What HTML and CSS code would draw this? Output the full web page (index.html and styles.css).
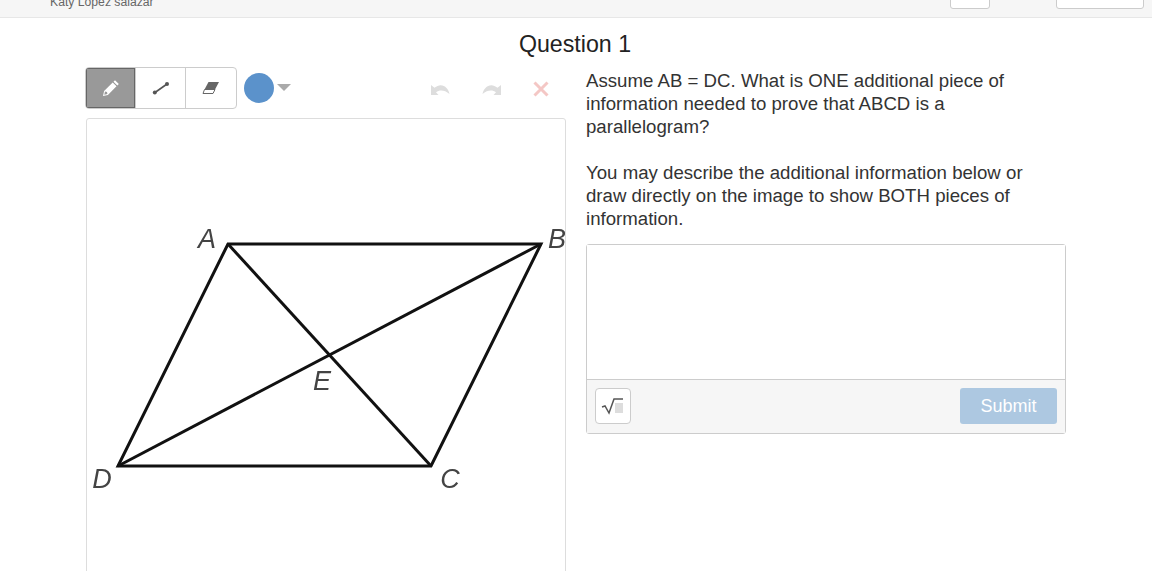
FILE: index.html
```html
<!DOCTYPE html>
<html lang="en">
<head>
    <meta charset="UTF-8">
    <meta name="viewport" content="width=device-width, initial-scale=1.0">
    <title>Question 1</title>
    <link rel="stylesheet" href="styles.css">
</head>
<body>
    <header class="top-bar">
        <span class="student-name">Katy Lopez salazar</span>
        <div class="top-actions">
            <div class="top-btn top-btn-small"></div>
            <div class="top-btn top-btn-large"></div>
        </div>
    </header>

    <h1 class="question-title">Question 1</h1>

    <main class="question-layout">
        <section class="draw-column">
            <div class="toolbar">
                <div class="tool-group">
                    <div class="tool active">
                        <svg width="18" height="18" viewBox="0 0 18 18">
                            <path d="M13 1.200l3.800 3.800-1.500 1.500-3.800-3.800z" fill="#fff"/>
                            <path d="M10.700 3.500l3.800 3.800-8.600 8.600-4.900 1.100 1.100-4.900zM3 12.600l-.7 3.100 3.100-.7-.4-2z" fill="#fff" fill-rule="evenodd"/>
                        </svg>
                    </div>
                    <div class="tool">
                        <svg width="18" height="14" viewBox="0 0 18 14">
                            <path d="M3 11.500L15 3" stroke="#555" stroke-width="1.600"/>
                            <circle cx="2.800" cy="11.500" r="2" fill="#555"/>
                            <circle cx="15" cy="3" r="2" fill="#555"/>
                        </svg>
                    </div>
                    <div class="tool">
                        <svg width="18" height="14" viewBox="0 0 18 14">
                            <path d="M6.500 1H17l-4 7.500H2.500z" fill="#666"/>
                            <path d="M2.500 8.500H13L11 12.500H1z" fill="#fff" stroke="#666" stroke-width="1"/>
                        </svg>
                    </div>
                </div>
                <div class="color-picker">
                    <div class="color-dot"></div>
                    <div class="color-caret"></div>
                </div>
                <div class="history">
                    <svg width="20" height="12" viewBox="0 0 20 12">
                        <path d="M0 2v10h7.500L5 9.300C8.500 6.500 13.500 6.700 18.500 11 17.500 4.500 10.500-1.500 3.500 4.800z" fill="#ddd"/>
                    </svg>
                    <svg width="20" height="12" viewBox="0 0 20 12">
                        <path d="M20 2v10h-7.500L15 9.300C11.500 6.500 6.500 6.700 1.500 11 2.500 4.500 9.500-1.500 16.500 4.800z" fill="#ddd"/>
                    </svg>
                    <svg class="history-clear" width="16" height="16" viewBox="0 0 16 16">
                        <path d="M1.500 1.500l13 13M14.500 1.500l-13 13" stroke="#f4c7c5" stroke-width="3"/>
                    </svg>
                </div>
            </div>
            <div class="canvas">
                <svg class="figure" width="478" height="478" viewBox="0 0 478 478">
                    <g class="figure-lines">
                        <path d="M141 125H454L344 347H31Z"/>
                        <path d="M141 125L344 347"/>
                        <path d="M31 347L454 125"/>
                    </g>
                    <g class="figure-labels">
                        <text x="120" y="129">A</text>
                        <text x="470" y="129">B</text>
                        <text x="235" y="271">E</text>
                        <text x="15" y="369">D</text>
                        <text x="363" y="369">C</text>
                    </g>
                </svg>
            </div>
        </section>

        <section class="answer-column">
            <p class="prompt">
                Assume AB = DC. What is ONE additional piece of information needed to prove that ABCD is a parallelogram?<br><br>
                You may describe the additional information below or draw directly on the image to show BOTH pieces of information.
            </p>
            <div class="editor">
                <div class="editor-text"></div>
                <div class="editor-footer">
                    <div class="math-btn">
                        <svg width="24" height="18" viewBox="0 0 24 18">
                            <rect x="14" y="6" width="8" height="10" fill="#ddd"/>
                            <path d="M1 10l3-1 4 7L13 2h9" fill="none" stroke="#555" stroke-width="1.500"/>
                        </svg>
                    </div>
                    <button class="submit-btn">Submit</button>
                </div>
            </div>
        </section>
    </main>
</body>
</html>
```

FILE: styles.css
```css
html, body {
    height: 571px;
    overflow: hidden;
}

body {
    margin: 0;
    font-family: "Liberation Sans", Arial, sans-serif;
    color: #333;
    background-color: #fff;
}

.top-bar {
    display: flex;
    justify-content: space-between;
    align-items: flex-end;
    box-sizing: border-box;
    height: 18px;
    padding: 0 8px 8px 50px;
    background-color: #f6f6f6;
    border-bottom: 1px solid #e7e7e7;
    overflow: hidden;
}

.student-name {
    margin-bottom: -1px;
    font-size: 12.200px;
    line-height: 15px;
    color: #666;
}

.top-actions {
    display: flex;
    gap: 66px;
}

.top-btn {
    height: 20px;
    background-color: #fff;
    border: 1px solid #ccc;
    border-radius: 3px;
    box-sizing: border-box;
}

.top-btn-small {
    width: 40px;
}

.top-btn-large {
    width: 88px;
}

.question-title {
    margin: 9px 2px 6px 0;
    font-size: 23.200px;
    font-weight: normal;
    line-height: 34px;
    text-align: center;
    color: #222;
}

.question-layout {
    display: grid;
    grid-template-columns: 480px 480px;
    column-gap: 20px;
    margin-left: 86px;
}

.toolbar {
    display: flex;
    align-items: center;
    height: 42px;
    margin: 0 0 9px -1px;
}

.tool-group {
    display: flex;
    height: 42px;
    box-sizing: border-box;
    border: 1px solid #ccc;
    border-radius: 4px;
    overflow: hidden;
}

.tool {
    display: flex;
    align-items: center;
    justify-content: center;
    box-sizing: border-box;
    width: 50px;
    border-left: 1px solid #ccc;
}

.tool:first-child {
    width: 49px;
    border-left: none;
}

.tool:last-child {
    width: 51px;
}

.tool.active {
    background-color: #999;
    box-shadow: inset 0 0 0 1px #666;
}

.color-picker {
    display: flex;
    align-items: center;
    gap: 3px;
    margin-left: 7px;
}

.color-dot {
    width: 30px;
    height: 30px;
    border-radius: 50%;
    background-color: #5b92cb;
}

.color-caret {
    width: 0;
    height: 0;
    margin-bottom: 2px;
    border-left: 7px solid transparent;
    border-right: 7px solid transparent;
    border-top: 7px solid #aaa;
}

.history {
    display: flex;
    align-items: center;
    gap: 30px;
    margin-left: auto;
    margin-right: 17px;
    padding-top: 2px;
}

.history-clear {
    margin-left: 2px;
}

.canvas {
    height: 480px;
    box-sizing: border-box;
    border: 1px solid #ddd;
    border-radius: 3px;
    background-color: #fff;
}

.figure {
    display: block;
}

.figure-lines {
    filter: blur(0.4px);
}

.figure-lines path {
    fill: none;
    stroke: #111;
    stroke-width: 3;
    stroke-linejoin: miter;
}

.figure-labels {
    filter: blur(0.3px);
}

.figure-labels text {
    font-size: 27px;
    font-style: italic;
    fill: #444;
    text-anchor: middle;
}

.prompt {
    margin: 2px 0 14px;
    font-size: 18.650px;
    line-height: 23px;
}

.editor {
    border: 1px solid #ccc;
    border-radius: 3px;
}

.editor-text {
    height: 134px;
    background-color: #fff;
    border-bottom: 1px solid #ccc;
}

.editor-footer {
    display: flex;
    justify-content: space-between;
    align-items: flex-start;
    box-sizing: border-box;
    height: 53px;
    padding: 8px 8px 0;
    background-color: #f6f6f6;
}

.math-btn {
    display: flex;
    align-items: center;
    justify-content: center;
    width: 36px;
    height: 36px;
    box-sizing: border-box;
    background-color: #fff;
    border: 1px solid #ccc;
    border-radius: 4px;
}

.submit-btn {
    width: 97px;
    height: 36px;
    padding: 0;
    font-family: inherit;
    font-size: 18px;
    color: #fff;
    background-color: #adc8e1;
    border: none;
    border-radius: 3px;
}
```
